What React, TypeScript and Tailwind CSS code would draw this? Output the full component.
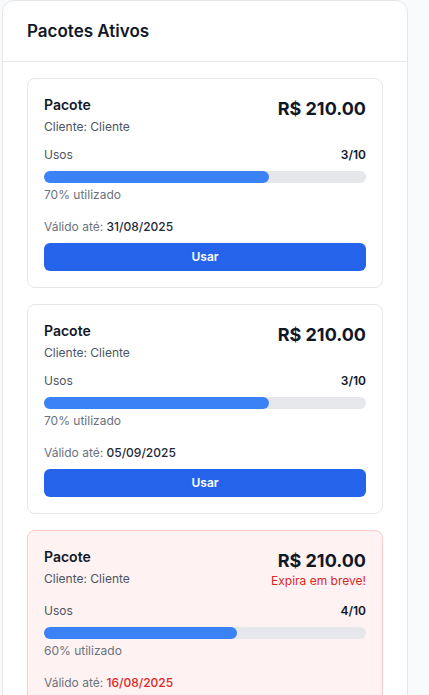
import React from "react";

type Pkg = {
  uses: number;
  total: number;
  pct: number;
  date: string;
  expiring?: boolean;
};

const pkgs: Pkg[] = [
  { uses: 3, total: 10, pct: 70, date: "31/08/2025" },
  { uses: 3, total: 10, pct: 70, date: "05/09/2025" },
  { uses: 4, total: 10, pct: 60, date: "16/08/2025", expiring: true },
];

function Card({ p }: { p: Pkg }) {
  return (
    <div
      className={
        p.expiring
          ? "rounded-lg border border-[#fecaca] bg-[#fef2f2] p-4"
          : "rounded-lg border border-[#e5e7eb] bg-white p-4"
      }
    >
      <div className="flex items-start justify-between">
        <div>
          <div className="text-sm leading-5 font-semibold text-[#111827]">Pacote</div>
          <div className="mt-0.5 text-xs leading-5 text-[#4b5563]">Cliente: Cliente</div>
        </div>
        <div className="text-right">
          <div className="text-lg leading-7 font-bold text-[#111827]">R$ 210.00</div>
          {p.expiring && (
            <div className="-mt-0.5 mb-1 text-xs leading-4 text-[#dc2626]">Expira em breve!</div>
          )}
        </div>
      </div>
      <div className="mt-2">
        <div className="flex justify-between text-xs leading-5">
          <span className="text-[#4b5563]">Usos</span>
          <span className="font-semibold text-[#111827]">
            {p.uses}/{p.total}
          </span>
        </div>
        <div className="mt-1.5 h-3 w-full rounded-full bg-[#e5e7eb]">
          <div className="h-3 rounded-full bg-[#3b82f6]" style={{ width: `${p.pct}%` }} />
        </div>
        <div className="mt-0.5 text-xs leading-5 text-[#6b7280]">{p.pct}% utilizado</div>
      </div>
      <div className="mt-3 text-xs leading-5 text-[#6b7280]">
        Válido até:{" "}
        <span className={p.expiring ? "font-medium text-[#dc2626]" : "font-medium text-[#1f2937]"}>
          {p.date}
        </span>
      </div>
      {!p.expiring && (
        <button className="mt-1.5 h-7 w-full rounded-md bg-[#2563eb] text-xs font-semibold text-white">
          Usar
        </button>
      )}
    </div>
  );
}

export default function App() {
  return (
    <div
      className="min-h-[695px] bg-[#f9fafb]"
      style={{ fontFamily: "Inter, 'Noto Sans', sans-serif" }}
    >
      <div className="ml-[2px] w-[406px] min-h-[700px] rounded-t-xl border border-[#e5e7eb] bg-white">
        <div className="border-b border-[#e5e7eb] px-6 py-4">
          <h2 className="text-[17px] leading-7 font-semibold text-[#111827]">Pacotes Ativos</h2>
        </div>
        <div className="flex flex-col gap-4 px-6 pt-4 pb-6">
          {pkgs.map((p, i) => (
            <Card key={i} p={p} />
          ))}
        </div>
      </div>
    </div>
  );
}
